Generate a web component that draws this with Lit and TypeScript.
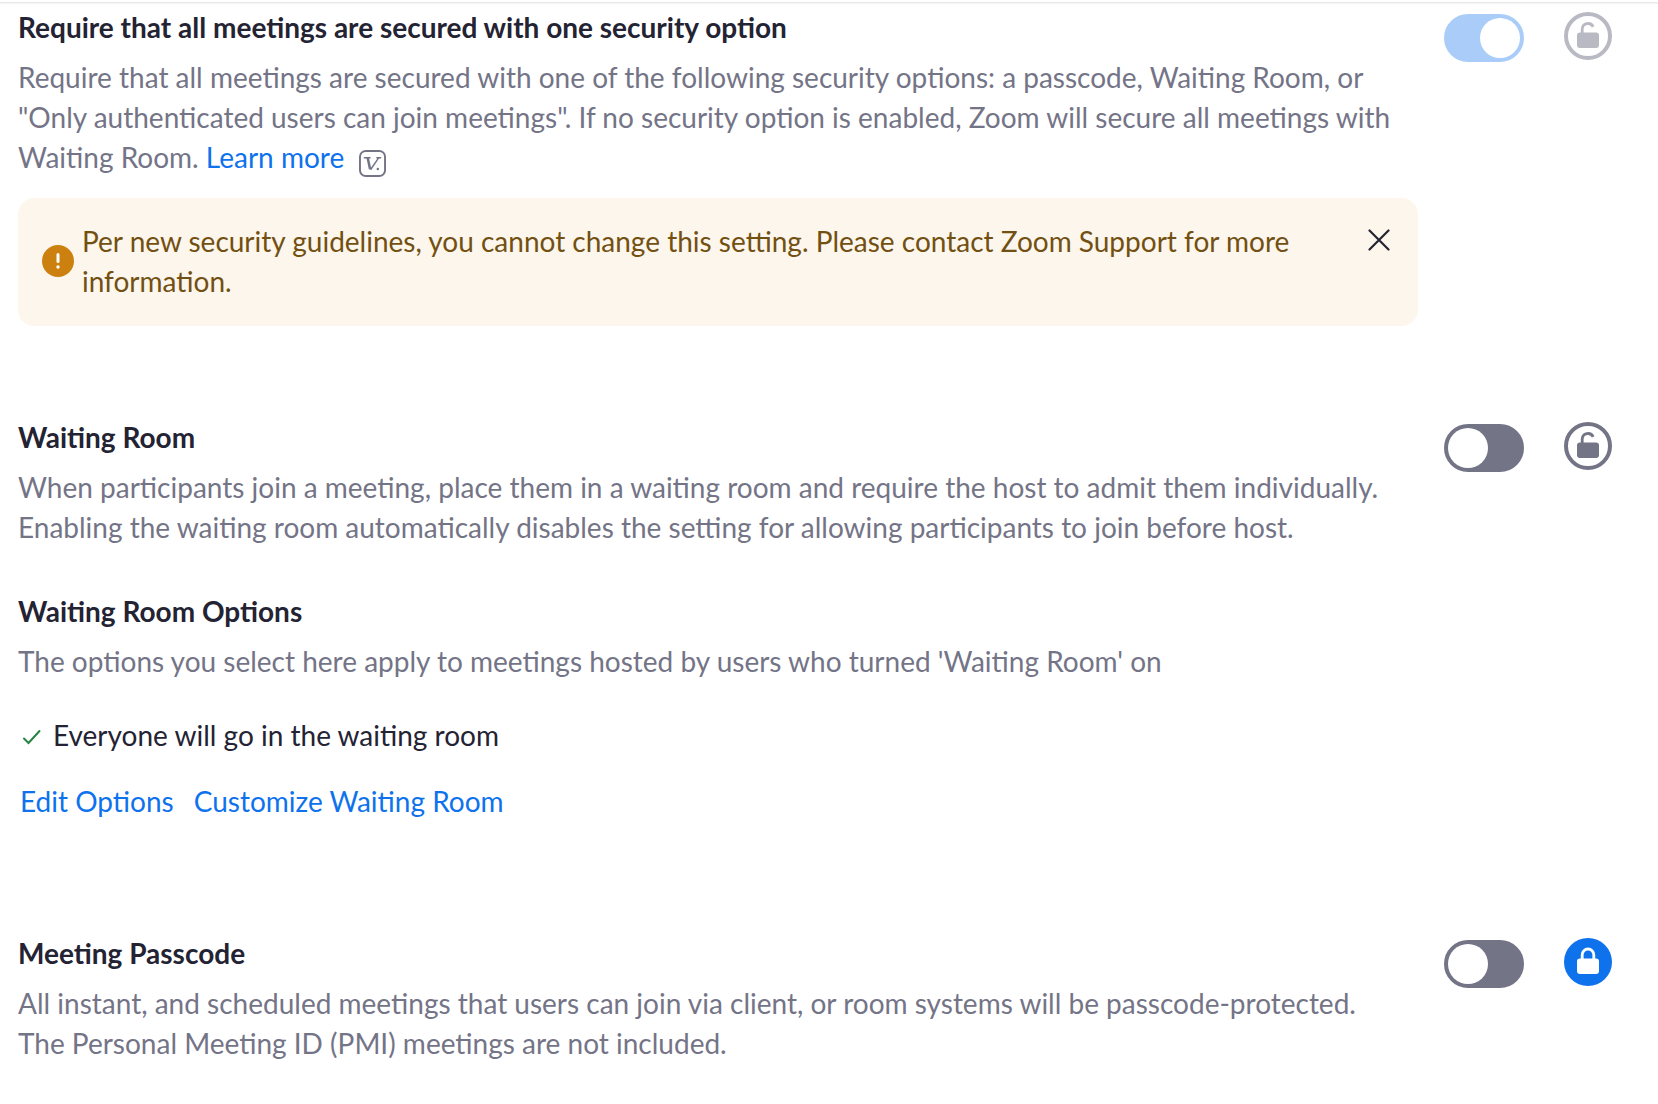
import { LitElement, html, css, svg, nothing } from "lit";
import { customElement, property, state } from "lit/decorators.js";

type LockState = "open" | "closed" | "disabled";

@customElement("setting-controls")
class SettingControls extends LitElement {
  @property() label = "";
  @property({ type: Boolean }) on = false;
  @property({ type: Boolean }) disabled = false;
  @property() lock: LockState = "open";

  static styles = css`
    :host { display: flex; align-items: flex-start; gap: 40px; }
    .switch {
      appearance: none; box-sizing: border-box; width: 80px; height: 48px; margin: 2px 0 0;
      border: 4px solid #747487; border-radius: 24px; background: #747487;
      display: flex; cursor: pointer;
    }
    .switch::before { content: ""; width: 40px; height: 40px; border-radius: 50%; background: #fff; }
    .switch:checked { background: #0e72ed; border-color: #0e72ed; justify-content: flex-end; }
    .switch:disabled { background: #aaccf8; border-color: #aaccf8; cursor: default; }
    .lock { display: block; width: 48px; height: 48px; padding: 0; border: 0; background: none; cursor: pointer; }
    .lock:disabled { cursor: default; }
    .lock svg { display: block; width: 48px; height: 48px; }
    .open { color: #747487; }
    .disabled { color: #b9b9c3; }
  `;

  render() {
    const shape = this.lock === "closed"
      ? svg`<circle cx="24" cy="24" r="24" fill="#0e72ed"/>
          <rect x="13" y="20.500" width="22" height="15.500" rx="3" fill="#fff"/>
          <path d="M18.200 22v-5.200a5.800 5.800 0 0 1 11.600 0V22" fill="none" stroke="#fff" stroke-width="2.800"/>`
      : svg`<circle cx="24" cy="24" r="22" fill="none" stroke="currentColor" stroke-width="4"/>
          <rect x="13" y="20.500" width="22" height="15.500" rx="3" fill="currentColor"/>
          <path d="M18.200 22v-5a5.800 5.800 0 0 1 11-2.200" fill="none" stroke="currentColor" stroke-width="2.800"/>`;
    return html`
      <input class="switch" type="checkbox" role="switch" aria-label=${this.label}
        .checked=${this.on} ?disabled=${this.disabled}>
      <button class="lock ${this.lock}" aria-label="Lock ${this.label}" ?disabled=${this.disabled}>
        <svg viewBox="0 0 48 48" aria-hidden="true">${shape}</svg>
      </button>`;
  }
}

@customElement("app-root")
class AppRoot extends LitElement {
  @state() private noticeOpen = true;

  static styles = css`
    :host {
      display: block; box-sizing: border-box; min-height: 100vh; background: #fff;
      font: 28px/40px Lato, sans-serif; color: #232333;
    }
    .rule { height: 1px; margin: 0; border: 0; background: #e8e8eb; box-shadow: 0 1px 1px #f0f0f2; }
    .page { padding: 2px 0 0; }
    .settings { padding: 4px 46px 40px 18px; }
    .setting { display: flex; align-items: flex-start; gap: 26px; }
    .setting + .setting { margin-top: 91px; }
    .body { flex: 1; min-width: 0; }
    setting-controls { padding-top: 5px; }
    h2, h3, p { margin: 0; }
    h2, h3 { font-size: 28px; line-height: 40px; font-weight: 700; }
    .text { margin-top: 10px; padding-right: 20px; color: #747487; }
    .options { margin-top: 44px; padding-bottom: 21px; }
    a { color: #0e72ed; text-decoration: none; }
    .badge { width: 27px; height: 27px; margin-left: 8px; vertical-align: -9px; }
    .notice {
      display: flex; align-items: center; gap: 8px; margin-top: 21px; padding: 23px 24px 25px;
      border-radius: 16px; background: #fdf6ec; color: #725012;
    }
    .notice p { flex: 1; }
    .warn { width: 32px; height: 32px; flex: none; }
    .close { align-self: flex-start; padding: 8px 4px; margin-left: 40px; border: 0; background: none; color: #232333; cursor: pointer; }
    .close svg { display: block; width: 22px; height: 22px; }
    .choice { display: flex; align-items: center; gap: 12px; margin-top: 34px; }
    .choice svg { width: 19px; height: 20px; margin-left: 4px; }
    .links { display: flex; gap: 20px; margin-top: 26px; padding-left: 2px; }
  `;

  render() {
    return html`
      <div class="page">
      <hr class="rule">
      <main class="settings">
      <section class="setting">
        <div class="body">
          <h2>Require that all meetings are secured with one security option</h2>
          <p class="text">Require that all meetings are secured with one of the following security options: a passcode, Waiting Room, or "Only authenticated users can join meetings". If no security option is enabled, Zoom will secure all meetings with Waiting Room. <a href="#learn">Learn more</a>
            <svg class="badge" viewBox="0 0 28 28" fill="none" stroke="#747487" stroke-width="2" aria-hidden="true">
              <rect x="1" y="1" width="26" height="26" rx="6"/>
              <path d="M5 8h7M18 8h5" stroke-width="1.500"/><path d="M9 8l2.500 12" stroke-width="2.600"/><path d="M12 20.500L20.500 8" stroke-width="1.500"/>
              <circle cx="19.500" cy="19.700" r="1.300" fill="#747487" stroke="none"/>
            </svg></p>
          ${this.noticeOpen ? html`<div class="notice" role="status">
            <svg class="warn" viewBox="0 0 32 32" aria-hidden="true"><circle cx="16" cy="16" r="16" fill="#cc8010"/><path d="M16 9.500v7" stroke="#fff" stroke-width="3" stroke-linecap="round"/><circle cx="16" cy="22" r="1.700" fill="#fff"/></svg>
            <p>Per new security guidelines, you cannot change this setting. Please contact Zoom Support for more information.</p>
            <button class="close" aria-label="Close" @click=${() => (this.noticeOpen = false)}>
              <svg viewBox="0 0 22 22" fill="none" stroke="currentColor" stroke-width="2.200" stroke-linecap="round" aria-hidden="true"><path d="M1.500 1.500l19 19M20.500 1.500l-19 19"/></svg>
            </button>
          </div>` : nothing}
        </div>
        <setting-controls label="Require a security option" on disabled lock="disabled"></setting-controls>
      </section>
      <section class="setting">
        <div class="body">
          <h2>Waiting Room</h2>
          <p class="text">When participants join a meeting, place them in a waiting room and require the host to admit them individually. Enabling the waiting room automatically disables the setting for allowing participants to join before host.</p>
          <div class="options">
            <h3>Waiting Room Options</h3>
            <p class="text">The options you select here apply to meetings hosted by users who turned 'Waiting Room' on</p>
            <div class="choice">
              <svg viewBox="0 0 19 20" fill="none" stroke="#268543" stroke-width="2" stroke-linecap="round" aria-hidden="true"><path d="M2 13.500l4.500 4.500L17.500 6"/></svg>
              <span>Everyone will go in the waiting room</span>
            </div>
            <div class="links"><a href="#edit">Edit Options</a><a href="#customize">Customize Waiting Room</a></div>
          </div>
        </div>
        <setting-controls label="Waiting Room" lock="open"></setting-controls>
      </section>
      <section class="setting">
        <div class="body">
          <h2>Meeting Passcode</h2>
          <p class="text">All instant, and scheduled meetings that users can join via client, or room systems will be passcode-protected. The Personal Meeting ID (PMI) meetings are not included.</p>
        </div>
        <setting-controls label="Meeting Passcode" lock="closed"></setting-controls>
      </section>
      </main>
      </div>`;
  }
}
